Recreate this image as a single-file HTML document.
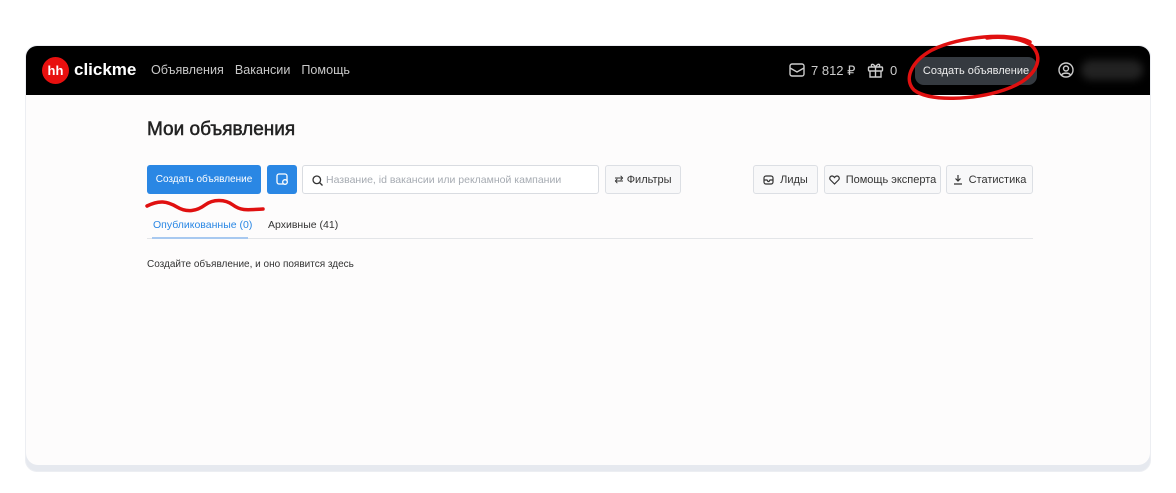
<!DOCTYPE html>
<html><head><meta charset="utf-8"><style>
*{box-sizing:border-box;margin:0;padding:0}
body{width:1176px;height:493px;background:#fff;font-family:"Liberation Sans",sans-serif;position:relative;overflow:hidden}
.frame{position:absolute;left:25px;top:45px;width:1126px;height:427px;border-radius:12px;background:#e6e9ef;overflow:hidden;border:1px solid #eceef2}
.nav{position:absolute;left:0;top:0;width:100%;height:49px;background:#000}
.content{position:absolute;left:0;top:49px;width:100%;height:370px;background:#fdfcfc;border-radius:0 0 12px 12px}
.abs{position:absolute}
.btn{position:absolute;border:1px solid #dcdfe4;border-radius:3px;background:#f8f8f9;font-size:11px;color:#333;display:flex;align-items:center;justify-content:center;gap:6px;height:29px;top:165px}
</style></head><body>
<div class="frame">
 <div class="nav">
  <div class="abs" style="left:16px;top:11px;width:27px;height:27px;border-radius:50%;background:#e8100f;color:#fff;font-weight:bold;font-size:13px;text-align:center;line-height:27px">hh</div>
  <div class="abs" style="left:48px;top:14px;color:#fff;font-weight:bold;font-size:17px">clickme</div>
  <div class="abs" style="left:125px;top:17px;color:#c8c8c8;font-size:12.6px;word-spacing:2px">Объявления&nbsp; Вакансии&nbsp; Помощь</div>
  <svg class="abs" style="left:763px;top:17px" width="16" height="14" viewBox="0 0 16 14" fill="none" stroke="#ccc" stroke-width="1.4"><rect x="1" y="1" width="14" height="12" rx="2"/><path d="M1 5l7 4 7-4"/></svg>
  <div class="abs" style="left:785px;top:17px;color:#ccc;font-size:13px">7 812 ₽</div>
  <svg class="abs" style="left:841px;top:16px" width="17" height="16" viewBox="0 0 17 16" fill="none" stroke="#ccc" stroke-width="1.4"><rect x="1.5" y="5" width="14" height="4" rx="1"/><path d="M3 9v6h11V9M8.5 5v10M8.5 5C6 1 3 2 5 5M8.5 5c2.5-4 5.5-3 3.5 0"/></svg>
  <div class="abs" style="left:864px;top:17px;color:#ccc;font-size:13px">0</div>
  <div class="abs" style="left:889px;top:11px;width:122px;height:28px;border-radius:9px;background:#353a40;color:#eee;font-size:11px;text-align:center;line-height:28px">Создать объявление</div>
  <svg class="abs" style="left:1032px;top:16px" width="16" height="16" viewBox="0 0 16 16" fill="none" stroke="#ccc" stroke-width="1.4"><circle cx="8" cy="8" r="7"/><circle cx="8" cy="6.5" r="2.5"/><path d="M3.5 13c1.5-2.5 7.5-2.5 9 0"/></svg>
  <div class="abs" style="left:1055px;top:14px;width:62px;height:20px;border-radius:10px;background:#222;filter:blur(4px)"></div>
 </div>
 <div class="content"></div>
</div>
<svg class="abs" style="left:0;top:0" width="1176" height="493"><path d="M1030 42c-20-10-70-6-98 8-22 12-28 30-18 40 15 12 60 10 90 0 30-10 42-30 28-44-10-8-30-10-45-8" fill="none" stroke="#e01010" stroke-width="3.5" stroke-linecap="round"/><path d="M147 206c12-6 20-5 30 1s20 4 28-2 20-6 28 0 14 5 30 4" fill="none" stroke="#e01010" stroke-width="3.5" stroke-linecap="round"/></svg>
<div class="abs" style="left:147px;top:119px;font-size:19px;color:#222;-webkit-text-stroke:0.5px #222">Мои объявления</div>
<div class="abs" style="left:147px;top:165px;width:114px;height:29px;border-radius:3px;background:#2a87e4;color:#fff;font-size:10px;line-height:29px;text-align:center">Создать объявление</div>
<div class="abs" style="left:267px;top:165px;width:30px;height:29px;border-radius:3px;background:#2a87e4"><svg style="margin:8px 0 0 9px" width="13" height="13" viewBox="0 0 13 13" fill="none" stroke="#fff" stroke-width="1.3"><rect x="1" y="1" width="10" height="10" rx="2"/><circle cx="9" cy="9" r="2.3" fill="#2a87e4"/></svg></div>
<div class="abs" style="left:302px;top:165px;width:297px;height:29px;border:1px solid #d9dce1;border-radius:3px;background:#fff"><svg style="position:absolute;left:9px;top:9px" width="11" height="11" viewBox="0 0 11 11" fill="none" stroke="#333" stroke-width="1.3"><circle cx="4.8" cy="4.8" r="3.8"/><path d="M7.5 7.5l3 3"/></svg><span style="position:absolute;left:23px;top:8px;font-size:10.5px;color:#a6abb2">Название, id вакансии или рекламной кампании</span></div>
<div class="btn" style="left:605px;width:76px">⇄ Фильтры</div>
<div class="btn" style="left:753px;width:65px"><svg width="11" height="10" viewBox="0 0 11 10" fill="none" stroke="#333" stroke-width="1.2"><rect x="1" y="1" width="9" height="8" rx="2"/><path d="M1 5h3l1 1.5h1L7 5h3"/></svg>Лиды</div>
<div class="btn" style="left:824px;width:117px"><svg width="11" height="10" viewBox="0 0 11 10" fill="none" stroke="#333" stroke-width="1.2"><path d="M5.5 9L1.5 5C0 3.5 1 1 3 1c1.2 0 2 .8 2.5 1.5C6 1.8 6.8 1 8 1c2 0 3 2.5 1.5 4z"/></svg>Помощь эксперта</div>
<div class="btn" style="left:946px;width:87px"><svg width="10" height="11" viewBox="0 0 10 11" fill="none" stroke="#333" stroke-width="1.2"><path d="M5 1v6M2.5 4.5L5 7l2.5-2.5M1 10h8"/></svg>Статистика</div>
<div class="abs" style="left:153px;top:219px;font-size:10.5px;color:#2a87e4">Опубликованные (0)</div>
<div class="abs" style="left:268px;top:219px;font-size:10.5px;color:#333">Архивные (41)</div>
<div class="abs" style="left:147px;top:238px;width:886px;height:1px;background:#e3e5e8"></div>
<div class="abs" style="left:152px;top:237px;width:96px;height:2px;background:#a8c9f0"></div>
<div class="abs" style="left:147px;top:259px;font-size:10px;color:#333">Создайте объявление, и оно появится здесь</div>
</body></html>
